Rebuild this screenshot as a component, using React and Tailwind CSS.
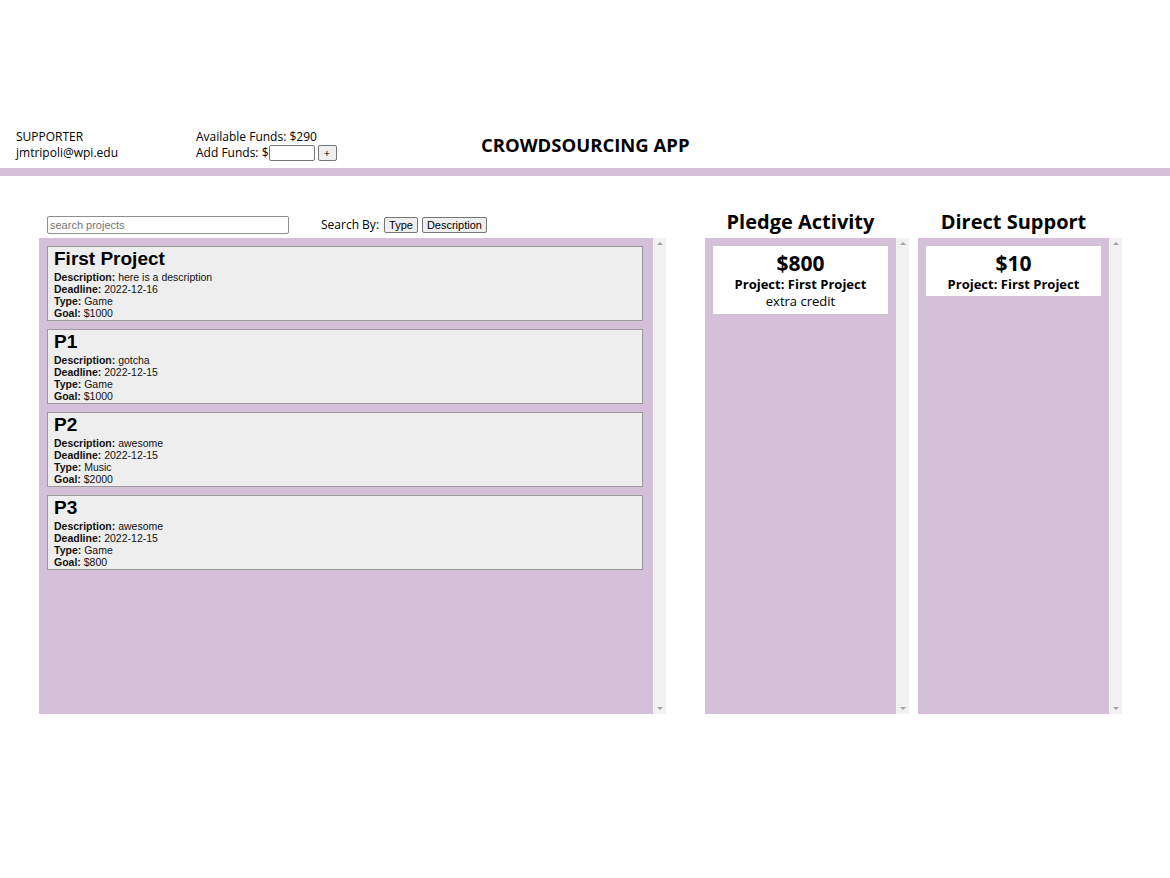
import React, { useState } from "react";

const projects = [
  { name: "First Project", description: "here is a description", deadline: "2022-12-16", type: "Game", goal: "$1000" },
  { name: "P1", description: "gotcha", deadline: "2022-12-15", type: "Game", goal: "$1000" },
  { name: "P2", description: "awesome", deadline: "2022-12-15", type: "Music", goal: "$2000" },
  { name: "P3", description: "awesome", deadline: "2022-12-15", type: "Game", goal: "$800" },
];

const pledges = [{ amount: "$800", project: "First Project", note: "extra credit" }];
const directs = [{ amount: "$10", project: "First Project" }];

// fake scrollbar track so the picture matches
const ScrollTrack = () => (
  <div className="w-[13px] bg-[#f1f1f1] flex flex-col justify-between items-center py-[4px]">
    <div className="w-0 h-0 border-l-[3px] border-r-[3px] border-b-[3px] border-l-transparent border-r-transparent border-b-[#a3a3a3]" />
    <div className="w-0 h-0 border-l-[3px] border-r-[3px] border-t-[3px] border-l-transparent border-r-transparent border-t-[#a3a3a3]" />
  </div>
);

const ProjectCard = ({ project }) => (
  <div className="border border-[#9a9a9a] bg-[#eeeeee] px-[6px] pb-[1px] font-['Liberation_Sans',Arial,sans-serif] text-[#111]">
    <div className="text-[19px] leading-[24px] font-bold text-black">{project.name}</div>
    <div className="text-[10.5px] leading-[12px]"><b>Description:</b> {project.description}</div>
    <div className="text-[10.5px] leading-[12px]"><b>Deadline:</b> {project.deadline}</div>
    <div className="text-[10.5px] leading-[12px]"><b>Type:</b> {project.type}</div>
    <div className="text-[10.5px] leading-[12px]"><b>Goal:</b> {project.goal}</div>
  </div>
);

const ActivityCard = ({ item }) => (
  <div className="bg-white text-center pt-[4px] pb-[4px] text-black">
    <div className="text-[21px] leading-[26px] font-bold">{item.amount}</div>
    <div className="text-[13px] leading-[16px] font-bold">Project: {item.project}</div>
    {item.note && <div className="text-[13px] leading-[18px]">{item.note}</div>}
  </div>
);

const SidePanel = ({ title, items }) => (
  <div className="w-[204px] flex flex-col">
    <h2 className="w-[191px] text-[20px] leading-[30px] font-bold text-center h-[30px] mt-[1px] mb-[1px]">{title}</h2>
    <div className="flex h-[476px]">
      <div className="flex-1 bg-[#d4c0d8] p-[8px] flex flex-col gap-2">
        {items.map((item, i) => (
          <ActivityCard key={i} item={item} />
        ))}
      </div>
      <ScrollTrack />
    </div>
  </div>
);

const App = () => {
  const [search, setSearch] = useState("");
  const [funds, setFunds] = useState("");

  return (
    <div className="min-h-[878px] bg-white text-black font-['Open_Sans','Noto_Sans',sans-serif]">
      {/* Header */}
      <div className="pt-[129px] flex items-start text-[12px] leading-[16px]">
        <div className="ml-[16px] w-[180px]">
          <div>SUPPORTER</div>
          <div>jmtripoli@wpi.edu</div>
        </div>
        <div className="w-[285px]">
          <div>Available Funds: $290</div>
          <div className="flex items-center">
            <span>Add Funds: $</span>
            <input
              value={funds}
              onChange={(e) => setFunds(e.target.value)}
              className="w-[46px] h-[16px] border border-[#767676] rounded-[2px] bg-white"
            />
            <button className="ml-[3px] w-[19px] h-[16px] text-[11px] leading-[12px] border border-[#767676] rounded-[2px] bg-[#efefef]">+</button>
          </div>
        </div>
        <h1 className="text-[18.5px] leading-[32px] font-bold">CROWDSOURCING APP</h1>
      </div>
      <div className="h-[8px] bg-[#d4c0d8] mt-[7px]" />

      {/* Main */}
      <div className="flex items-start mt-[30px]">
        {/* Projects */}
        <div className="ml-[39px] w-[627px] flex flex-col">
          <div className="h-[32px] flex items-center px-[8px] pt-[5px]">
            <input
              value={search}
              onChange={(e) => setSearch(e.target.value)}
              placeholder="search projects"
              className="w-[242px] h-[18px] border border-[#8f8f8f] rounded-[2px] px-[2px] text-[11px] font-['Liberation_Sans',Arial,sans-serif] placeholder:text-[#757575]"
            />
            <span className="ml-[32px] text-[12px]">Search By:</span>
            <button className="ml-[5px] h-[16px] px-[4px] text-[11px] leading-[12px] font-['Liberation_Sans',Arial,sans-serif] border border-[#767676] rounded-[2px] bg-[#efefef]">Type</button>
            <button className="ml-[4px] h-[16px] px-[4px] text-[11px] leading-[12px] font-['Liberation_Sans',Arial,sans-serif] border border-[#767676] rounded-[2px] bg-[#efefef]">Description</button>
          </div>
          <div className="flex h-[476px]">
            <div className="flex-1 bg-[#d4c0d8] p-[8px] pr-[10px] flex flex-col gap-2">
              {projects.map((p) => (
                <ProjectCard key={p.name} project={p} />
              ))}
            </div>
            <ScrollTrack />
          </div>
        </div>

        {/* Activity */}
        <div className="ml-[39px] flex gap-[9px]">
          <SidePanel title="Pledge Activity" items={pledges} />
          <SidePanel title="Direct Support" items={directs} />
        </div>
      </div>
    </div>
  );
};

export default App;
